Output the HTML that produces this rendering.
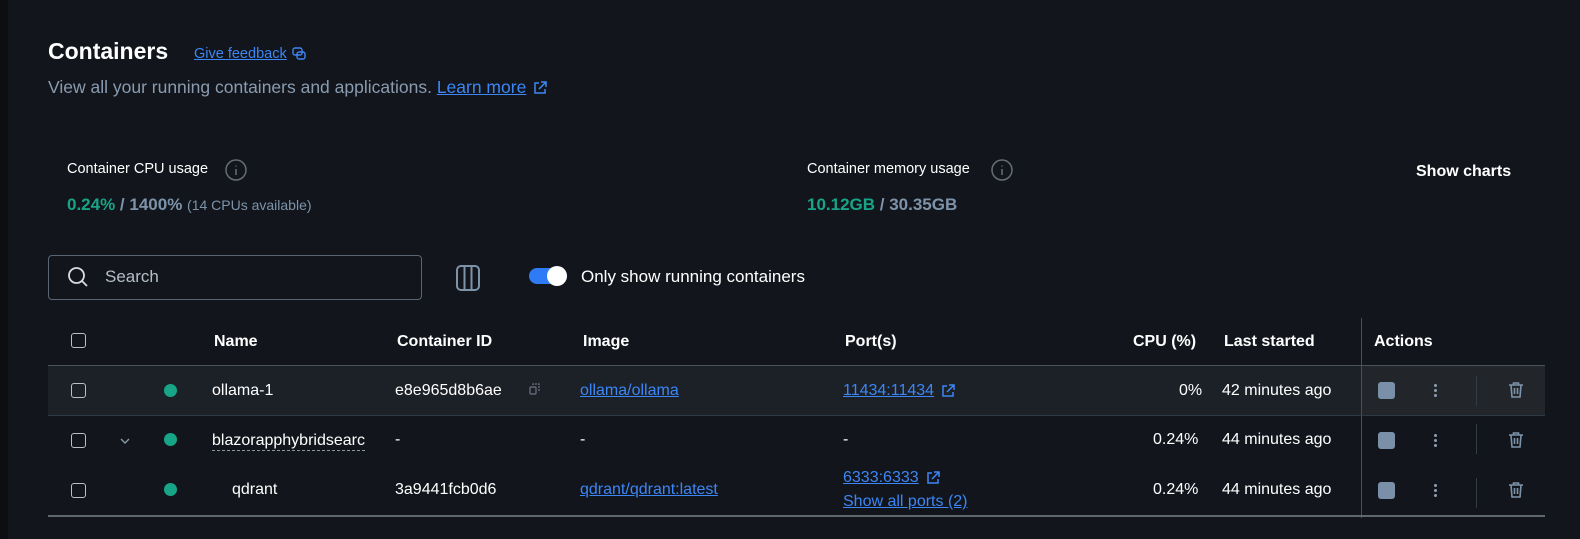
<!DOCTYPE html>
<html><head><meta charset="utf-8"><style>
*{margin:0;padding:0;box-sizing:border-box}
body{width:1580px;height:539px;background:#12161c;font-family:"Liberation Sans",sans-serif;color:#fff;position:relative;overflow:hidden}
.strip{position:absolute;left:0;top:0;width:8px;height:539px;background:#0c0e11}
.a{position:absolute;white-space:nowrap}
.lnk{color:#3c86f5;text-decoration:underline}
.h{font-weight:bold;font-size:16px}
.t{font-size:16px}
.cb{position:absolute;width:15px;height:15px;border:1.5px solid #b9c0c8;border-radius:3px}
.dot{position:absolute;width:13px;height:13px;border-radius:50%;background:#17a487}
.stop{position:absolute;width:17px;height:17px;border-radius:3px;background:#7990a8}
.kebab{position:absolute;width:3px;height:14px;background:radial-gradient(circle,#8a9aac 1.4px,transparent 1.6px) 0 0/3px 5px repeat-y}
.vsep{position:absolute;width:1px;height:30px;background:#353b44}
svg.i{vertical-align:middle;margin-left:6px}
</style></head><body>
<div class="strip"></div>
<div class="a" style="left:48px;top:38px;font-size:23px;font-weight:bold">Containers</div>
<div class="a" style="left:194px;top:46px;font-size:14.5px"><span class="lnk">Give feedback</span><svg class="i" style="margin-left:4px" width="16" height="16" viewBox="0 0 16 16" fill="none" stroke="#3c86f5" stroke-width="1.4"><rect x="2" y="2" width="9" height="7" rx="2"/><rect x="6" y="6" width="8" height="7" rx="2"/></svg></div>
<div class="a" style="left:48px;top:77px;font-size:17.5px;color:#8a9bb0">View all your running containers and applications. <span class="lnk">Learn more</span><svg class="i" width="16" height="16" viewBox="0 0 16 16" fill="none" stroke="#3c86f5" stroke-width="1.5"><path d="M7 3H3v10h10V9M9 2h5v5M14 2L7 9"/></svg></div>

<div class="a" style="left:67px;top:161px;font-size:14.5px">Container CPU usage</div>
<svg class="a" style="left:225px;top:159px" width="22" height="22" viewBox="0 0 22 22" fill="none" stroke="#666d76" stroke-width="1.5"><circle cx="11" cy="11" r="10"/><path d="M11 10v6M11 6.5v1"/></svg>
<div class="a" style="left:67px;top:195px;font-size:17px;font-weight:bold;color:#7d93aa"><span style="color:#17a487">0.24%</span> / 1400% <span style="font-weight:normal;font-size:14px">(14 CPUs available)</span></div>
<div class="a" style="left:807px;top:161px;font-size:14.5px">Container memory usage</div>
<svg class="a" style="left:991px;top:159px" width="22" height="22" viewBox="0 0 22 22" fill="none" stroke="#666d76" stroke-width="1.5"><circle cx="11" cy="11" r="10"/><path d="M11 10v6M11 6.5v1"/></svg>
<div class="a" style="left:807px;top:195px;font-size:17px;font-weight:bold;color:#7d93aa"><span style="color:#17a487">10.12GB</span> / 30.35GB</div>
<div class="a" style="left:1416px;top:163px;font-size:16px;font-weight:bold">Show charts</div>

<div class="a" style="left:48px;top:255px;width:374px;height:45px;border:1px solid #5a6575;border-radius:4px"></div>
<svg class="a" style="left:66px;top:265px" width="24" height="24" viewBox="0 0 24 24" fill="none" stroke="#d8dde3" stroke-width="1.8"><circle cx="10.5" cy="10.5" r="7.5"/><path d="M16 16l5 5"/></svg>
<div class="a" style="left:105px;top:267px;font-size:17px;color:#b5bec9">Search</div>
<svg class="a" style="left:455px;top:264px" width="26" height="28" viewBox="0 0 26 28" fill="none" stroke="#7d93aa" stroke-width="2"><rect x="2" y="2" width="22" height="24" rx="4"/><path d="M9.5 2v24M16.5 2v24"/></svg>
<div class="a" style="left:529px;top:268px;width:38px;height:16px;border-radius:8px;background:#2e7bf6"></div>
<div class="a" style="left:547px;top:266px;width:20px;height:20px;border-radius:50%;background:#fff"></div>
<div class="a" style="left:581px;top:267px;font-size:17px">Only show running containers</div>

<div class="cb" style="left:71px;top:333px"></div>
<div class="a h" style="left:214px;top:333px">Name</div>
<div class="a h" style="left:397px;top:333px">Container ID</div>
<div class="a h" style="left:583px;top:333px">Image</div>
<div class="a h" style="left:845px;top:333px">Port(s)</div>
<div class="a h" style="left:1133px;top:333px">CPU (%)</div>
<div class="a h" style="left:1224px;top:333px">Last started</div>
<div class="a h" style="left:1374px;top:333px">Actions</div>
<div class="a" style="left:1361px;top:318px;width:1px;height:200px;background:#4a5058"></div>

<div class="a" style="left:48px;top:365px;width:1497px;height:1px;background:#4a5260"></div>
<div class="a" style="left:48px;top:366px;width:1313px;height:49px;background:#1c2128"></div>
<div class="a" style="left:1362px;top:366px;width:183px;height:49px;background:#22262b"></div>
<div class="a" style="left:48px;top:415px;width:1497px;height:1px;background:#2f3a47"></div>
<div class="a" style="left:48px;top:515px;width:1497px;height:2px;background:#60666e"></div>

<div class="cb" style="left:71px;top:383px"></div>
<div class="dot" style="left:164px;top:384px"></div>
<div class="a t" style="left:212px;top:382px">ollama-1</div>
<div class="a t" style="left:395px;top:382px">e8e965d8b6ae</div>
<svg class="a" style="left:528px;top:382px" width="14" height="14" viewBox="0 0 14 14" fill="none" stroke="#6b7582" stroke-width="1.2"><rect x="2" y="5" width="6" height="7" rx="1"/><path d="M5 3V2h6v7h-1" stroke-dasharray="2 1"/></svg>
<div class="a t lnk" style="left:580px;top:382px">ollama/ollama</div>
<div class="a t" style="left:843px;top:382px"><span class="lnk">11434:11434</span><svg class="i" width="16" height="16" viewBox="0 0 16 16" fill="none" stroke="#3c86f5" stroke-width="1.5"><path d="M7 3H3v10h10V9M9 2h5v5M14 2L7 9"/></svg></div>
<div class="a t" style="left:1179px;top:382px">0%</div>
<div class="a t" style="left:1222px;top:382px">42 minutes ago</div>

<div class="cb" style="left:71px;top:433px"></div>
<svg class="a" style="left:119px;top:436px" width="12" height="10" viewBox="0 0 12 10" fill="none" stroke="#8a96a4" stroke-width="1.4"><path d="M2 3l4 4 4-4"/></svg>
<div class="dot" style="left:164px;top:433px"></div>
<div class="a t" style="left:212px;top:431px;border-bottom:1px dashed #8a96a4;line-height:19px">blazorapphybridsearc</div>
<div class="a t" style="left:395px;top:431px">-</div>
<div class="a t" style="left:580px;top:431px">-</div>
<div class="a t" style="left:843px;top:431px">-</div>
<div class="a t" style="left:1153px;top:431px">0.24%</div>
<div class="a t" style="left:1222px;top:431px">44 minutes ago</div>

<div class="cb" style="left:71px;top:483px"></div>
<div class="dot" style="left:164px;top:483px"></div>
<div class="a t" style="left:232px;top:481px">qdrant</div>
<div class="a t" style="left:395px;top:481px">3a9441fcb0d6</div>
<div class="a t lnk" style="left:580px;top:481px">qdrant/qdrant:latest</div>
<div class="a t" style="left:843px;top:469px"><span class="lnk">6333:6333</span><svg class="i" width="16" height="16" viewBox="0 0 16 16" fill="none" stroke="#3c86f5" stroke-width="1.5"><path d="M7 3H3v10h10V9M9 2h5v5M14 2L7 9"/></svg></div>
<div class="a t lnk" style="left:843px;top:493px">Show all ports (2)</div>
<div class="a t" style="left:1153px;top:481px">0.24%</div>
<div class="a t" style="left:1222px;top:481px">44 minutes ago</div>

<div class="stop" style="left:1378px;top:382px"></div>
<div class="kebab" style="left:1434px;top:383px"></div>
<div class="vsep" style="left:1476px;top:376px"></div>
<div class="stop" style="left:1378px;top:432px"></div>
<div class="kebab" style="left:1434px;top:433px"></div>
<div class="vsep" style="left:1476px;top:424px"></div>
<div class="stop" style="left:1378px;top:482px"></div>
<div class="kebab" style="left:1434px;top:483px"></div>
<div class="vsep" style="left:1476px;top:478px"></div>
<svg class="a" style="left:1507px;top:381px" width="18" height="18" viewBox="0 0 18 18" fill="none" stroke="#7d93aa" stroke-width="1.6"><path d="M2 4h14M6.5 4V2h5v2M4 4l1 12h8l1-12M7.5 7v6M10.5 7v6"/></svg>
<svg class="a" style="left:1507px;top:431px" width="18" height="18" viewBox="0 0 18 18" fill="none" stroke="#7d93aa" stroke-width="1.6"><path d="M2 4h14M6.5 4V2h5v2M4 4l1 12h8l1-12M7.5 7v6M10.5 7v6"/></svg>
<svg class="a" style="left:1507px;top:481px" width="18" height="18" viewBox="0 0 18 18" fill="none" stroke="#7d93aa" stroke-width="1.6"><path d="M2 4h14M6.5 4V2h5v2M4 4l1 12h8l1-12M7.5 7v6M10.5 7v6"/></svg>
</body></html>
